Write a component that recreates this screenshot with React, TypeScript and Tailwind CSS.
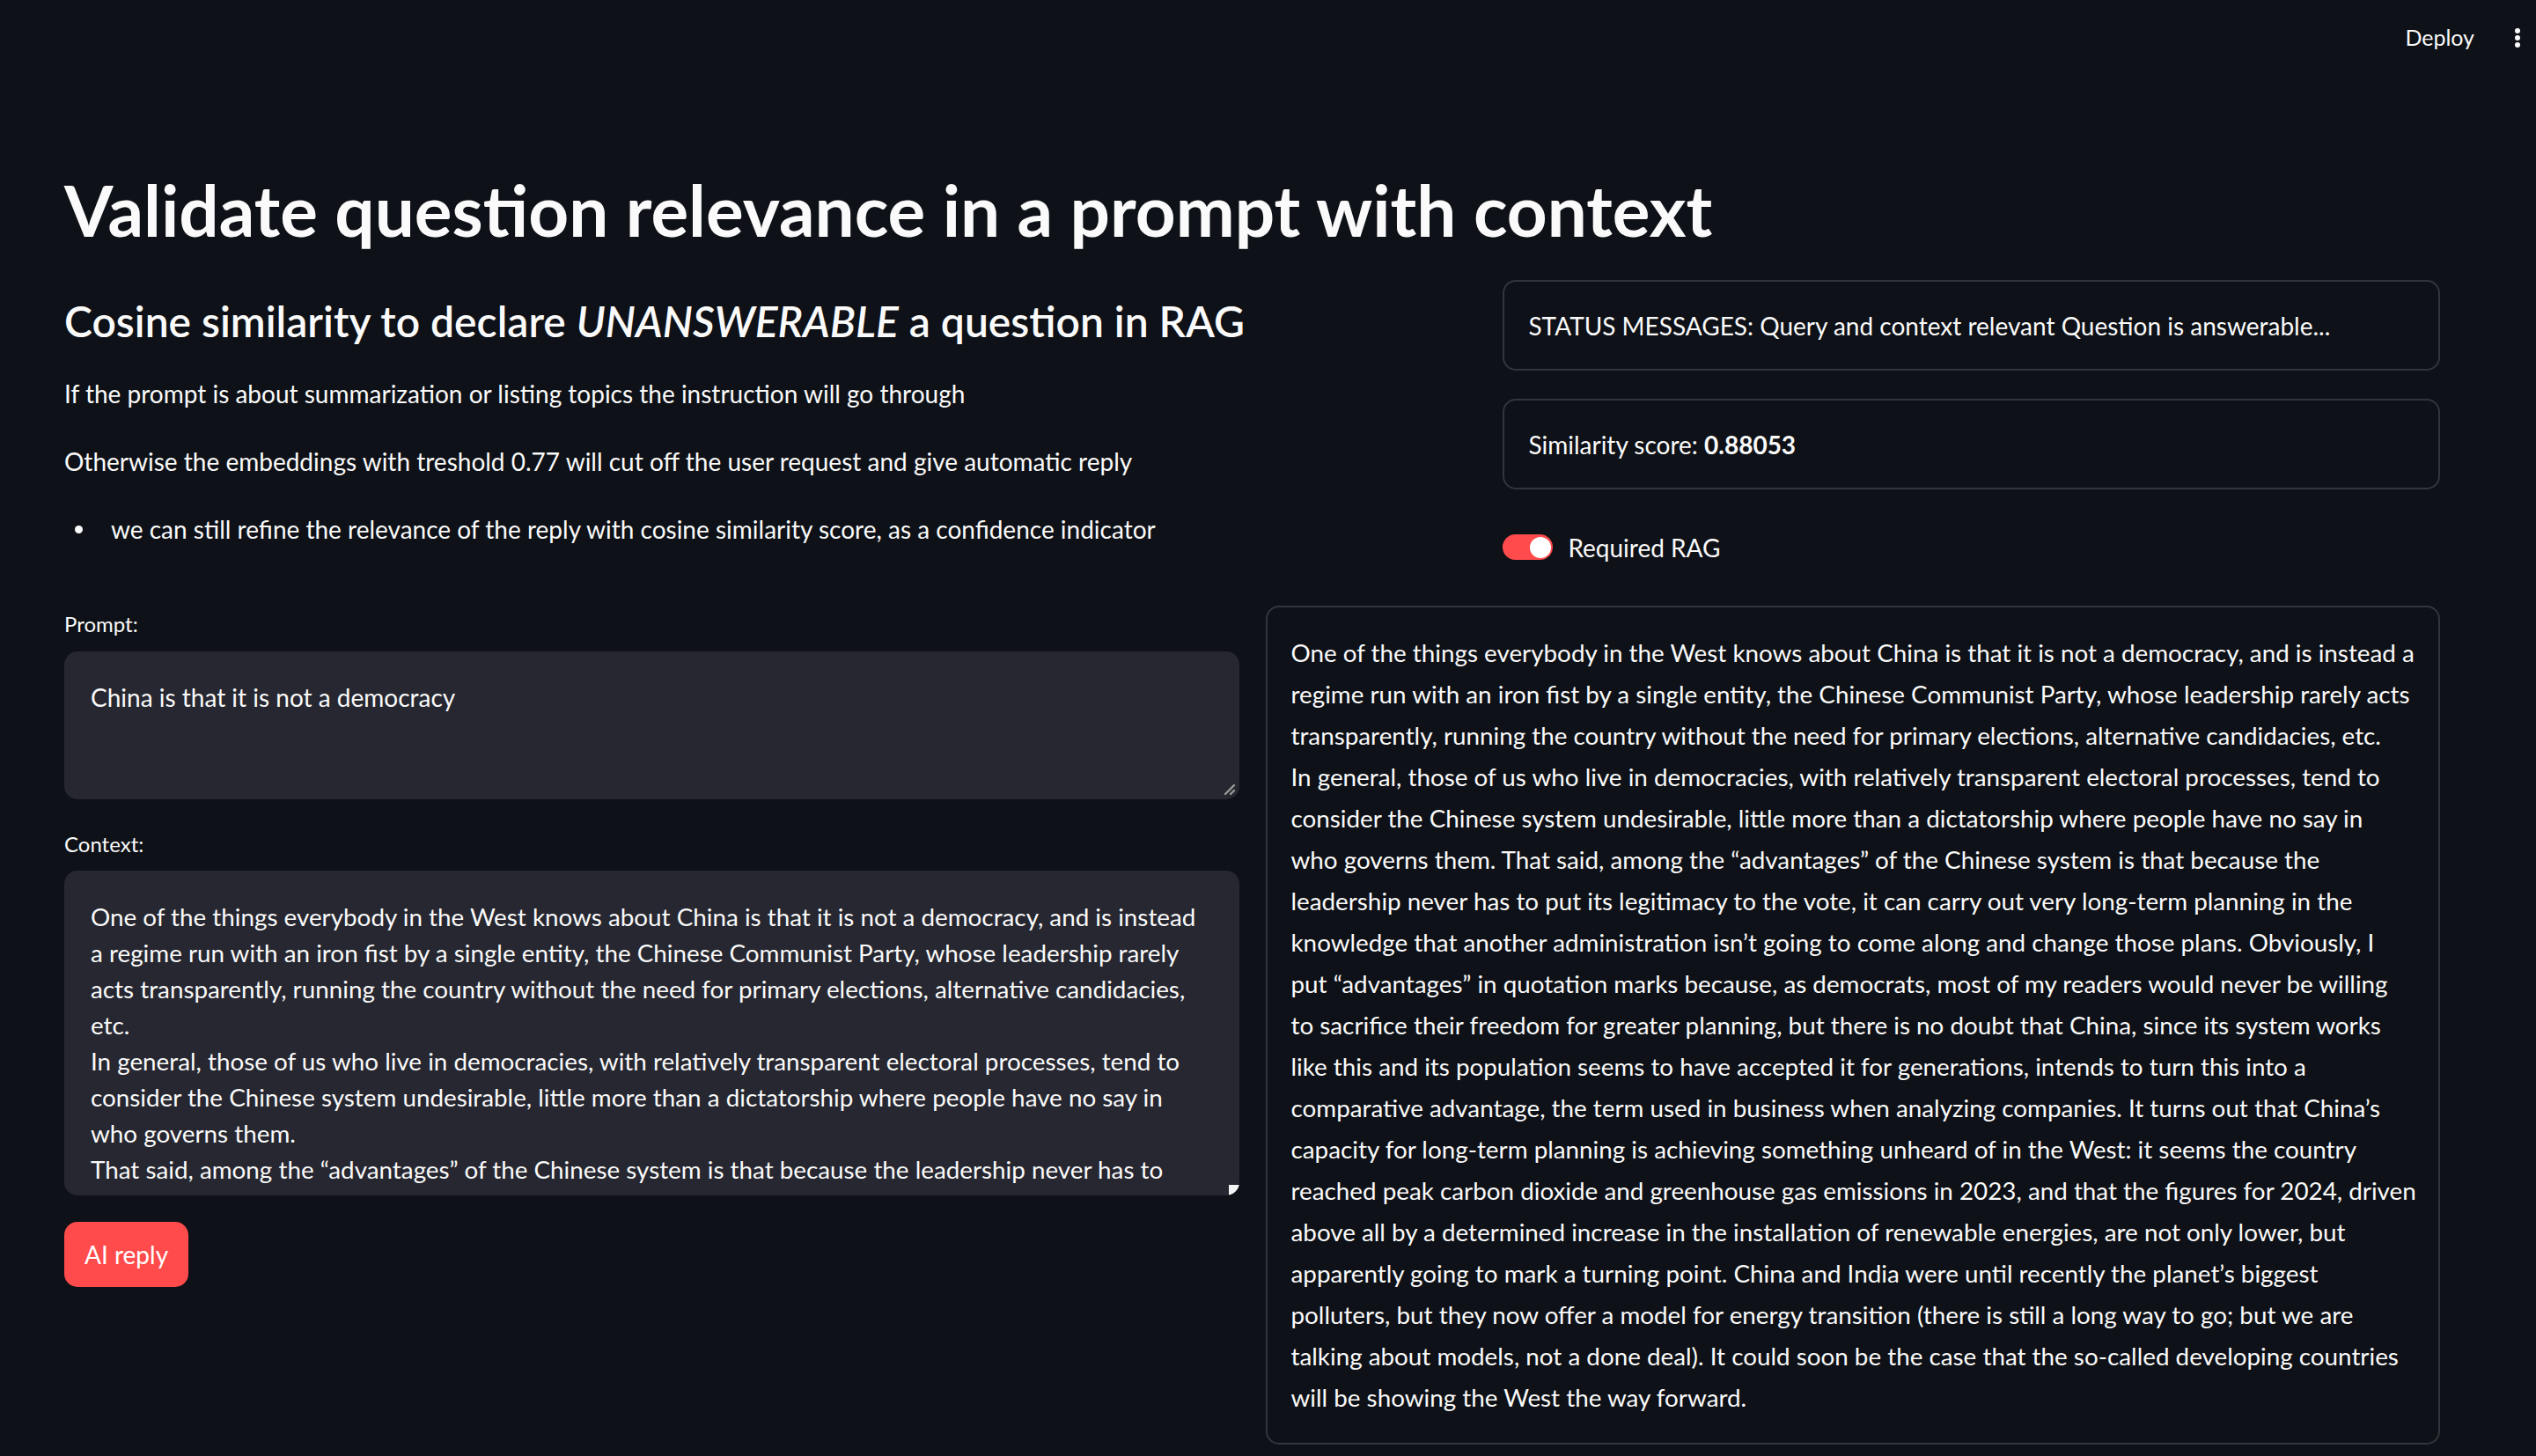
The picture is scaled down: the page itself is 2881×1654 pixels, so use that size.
import React from "react";

const replyLines = [
  "One of the things everybody in the West knows about China is that it is not a democracy, and is instead a",
  "regime run with an iron fist by a single entity, the Chinese Communist Party, whose leadership rarely acts",
  "transparently, running the country without the need for primary elections, alternative candidacies, etc.",
  "In general, those of us who live in democracies, with relatively transparent electoral processes, tend to",
  "consider the Chinese system undesirable, little more than a dictatorship where people have no say in",
  "who governs them. That said, among the \u201cadvantages\u201d of the Chinese system is that because the",
  "leadership never has to put its legitimacy to the vote, it can carry out very long-term planning in the",
  "knowledge that another administration isn\u2019t going to come along and change those plans. Obviously, I",
  "put \u201cadvantages\u201d in quotation marks because, as democrats, most of my readers would never be willing",
  "to sacrifice their freedom for greater planning, but there is no doubt that China, since its system works",
  "like this and its population seems to have accepted it for generations, intends to turn this into a",
  "comparative advantage, the term used in business when analyzing companies. It turns out that China\u2019s",
  "capacity for long-term planning is achieving something unheard of in the West: it seems the country",
  "reached peak carbon dioxide and greenhouse gas emissions in 2023, and that the figures for 2024, driven",
  "above all by a determined increase in the installation of renewable energies, are not only lower, but",
  "apparently going to mark a turning point. China and India were until recently the planet\u2019s biggest",
  "polluters, but they now offer a model for energy transition (there is still a long way to go; but we are",
  "talking about models, not a done deal). It could soon be the case that the so-called developing countries",
  "will be showing the West the way forward.",
];

const contextLines = [
  "One of the things everybody in the West knows about China is that it is not a democracy, and is instead",
  "a regime run with an iron fist by a single entity, the Chinese Communist Party, whose leadership rarely",
  "acts transparently, running the country without the need for primary elections, alternative candidacies,",
  "etc.",
  "In general, those of us who live in democracies, with relatively transparent electoral processes, tend to",
  "consider the Chinese system undesirable, little more than a dictatorship where people have no say in",
  "who governs them.",
  "That said, among the \u201cadvantages\u201d of the Chinese system is that because the leadership never has to",
];

function Grip() {
  return (
    <svg width="14" height="14" viewBox="0 0 14 14" className="absolute bottom-[4px] right-[4px]">
      <line x1="12" y1="2" x2="2" y2="12" stroke="#9a9a9a" strokeWidth="2.4" strokeLinecap="round" />
      <line x1="12" y1="8" x2="8" y2="12" stroke="#9a9a9a" strokeWidth="2.4" strokeLinecap="round" />
    </svg>
  );
}

export default function App() {
  return (
    <div className="min-h-screen bg-[#0e1117] text-[#fafafa] [font-family:Lato,sans-serif]">
      {/* top toolbar */}
      <header className="flex h-[86px] items-center justify-end pr-[17px]">
        <span className="mr-[45px] text-[25px]">Deploy</span>
        <svg width="8" height="24" viewBox="0 0 8 24">
          <circle cx="4" cy="4" r="3" fill="#fafafa" />
          <circle cx="4" cy="12" r="3" fill="#fafafa" />
          <circle cx="4" cy="20" r="3" fill="#fafafa" />
        </svg>
      </header>

      <main className="pl-[73px] pr-[109px]">
        <h1 className="mt-[104px] text-[80px] font-bold leading-[97px]">
          Validate question relevance in a prompt with context
        </h1>

        <div className="mt-[31px] grid grid-cols-[3fr_2fr] gap-x-[30px]">
          <div>
            <h3 className="mt-[16px] text-[48px] font-semibold leading-[62px]">
              Cosine similarity to declare <em>UNANSWERABLE</em> a question in RAG
            </h3>
            <p className="mt-[28px] text-[28px] leading-[47px]">
              If the prompt is about summarization or listing topics the instruction will go through
            </p>
            <p className="mt-[30px] text-[28px] leading-[47px]">
              Otherwise the embeddings with treshold 0.77 will cut off the user request and give automatic reply
            </p>
            <ul className="mt-[30px] text-[28px] leading-[47px]">
              <li className="flex items-center">
                <span className="ml-[12px] mr-[32px] h-[9px] w-[9px] rounded-full bg-[#fafafa]" />
                we can still refine the relevance of the reply with cosine similarity score, as a confidence indicator
              </li>
            </ul>
          </div>

          <div className="pl-[3px]">
            <div className="flex h-[103px] items-center rounded-[15px] border-2 border-[#33353c] px-[27px] text-[28px]">
              STATUS MESSAGES: Query and context relevant Question is answerable...
            </div>
            <div className="mt-[32px] flex h-[103px] items-center rounded-[15px] border-2 border-[#33353c] px-[27px] text-[28px]">
              Similarity score:&nbsp;<span className="font-bold">0.88053</span>
            </div>
            <div className="mt-[42px] flex h-[47px] items-center">
              <div className="flex h-[29px] w-[57px] items-center justify-end rounded-full bg-[#ff4b4b] pr-[2px]">
                <div className="h-[24px] w-[24px] rounded-full bg-white" />
              </div>
              <span className="ml-[17px] text-[28px]">Required RAG</span>
            </div>
          </div>
        </div>

        <div className="mt-[43px] grid grid-cols-2 items-start gap-x-[30px]">
          <div>
            <div className="flex h-[41px] items-center text-[24px]">Prompt:</div>
            <div className="relative mt-[11px] h-[168px] rounded-[15px] bg-[#262730] px-[30px] pt-[32px] text-[28px] leading-[41px]">
              China is that it is not a democracy
              <Grip />
            </div>

            <div className="mt-[30px] flex h-[41px] items-center text-[24px]">Context:</div>
            <div className="relative mt-[10px] h-[369px] overflow-hidden rounded-[15px] bg-[#262730] px-[30px] pt-[32px] text-[27.8px] leading-[41px]">
              {contextLines.map((l, i) => (
                <div key={i} className="whitespace-nowrap">
                  {l}
                </div>
              ))}
              <div className="absolute bottom-0 right-0 flex h-[12px] w-[12px] items-end justify-end bg-[#f5f5f5]">
                <svg width="8" height="8" viewBox="0 0 8 8">
                  <path d="M8 0 L8 8 L0 8 Z" fill="#3a3a3a" />
                </svg>
              </div>
            </div>

            <button className="mt-[30px] flex h-[74px] items-center rounded-[15px] bg-[#ff4b4b] px-[23px] text-[28px] text-white">
              AI reply
            </button>
          </div>

          <div className="rounded-[15px] border-2 border-[#33353c] px-[27px] py-[28px] text-[27.8px] leading-[47px]">
            {replyLines.map((l, i) => (
              <div key={i} className="whitespace-nowrap">
                {l}
              </div>
            ))}
          </div>
        </div>
      </main>
    </div>
  );
}
